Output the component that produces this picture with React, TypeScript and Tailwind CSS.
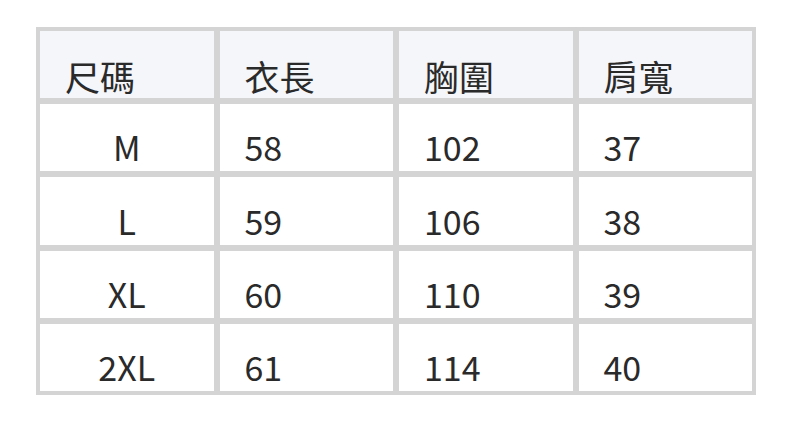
const headers = ["尺碼", "衣長", "胸圍", "肩寬"];

const rows = [
  ["M", "58", "102", "37"],
  ["L", "59", "106", "38"],
  ["XL", "60", "110", "39"],
  ["2XL", "61", "114", "40"],
];

export default function App() {
  return (
    <div
      className="w-[792px] h-[422px] bg-white pt-[27px] pl-[36px] text-[#2a2a2a]"
      style={{ fontFamily: '"Noto Sans CJK TC", "Noto Sans", sans-serif' }}
    >
      <div className="w-[720px] h-[368px] bg-[#d4d4d4] p-[4px] grid grid-cols-4 grid-rows-5 gap-[6px]">
        {headers.map((h) => (
          <div key={h} className="bg-[#f5f6fa] flex items-end px-[25px] pb-[5px] text-[35px] leading-none">
            {h}
          </div>
        ))}
        {rows.map((r) => (
          <>
            <div key={r[0]} className="bg-white flex items-end justify-center pb-[7px] text-[34px] leading-none">
              {r[0]}
            </div>
            {r.slice(1).map((v, i) => (
              <div key={r[0] + i} className="bg-white flex items-end px-[25px] pb-[7px] text-[34px] leading-none">
                {v}
              </div>
            ))}
          </>
        ))}
      </div>
    </div>
  );
}
